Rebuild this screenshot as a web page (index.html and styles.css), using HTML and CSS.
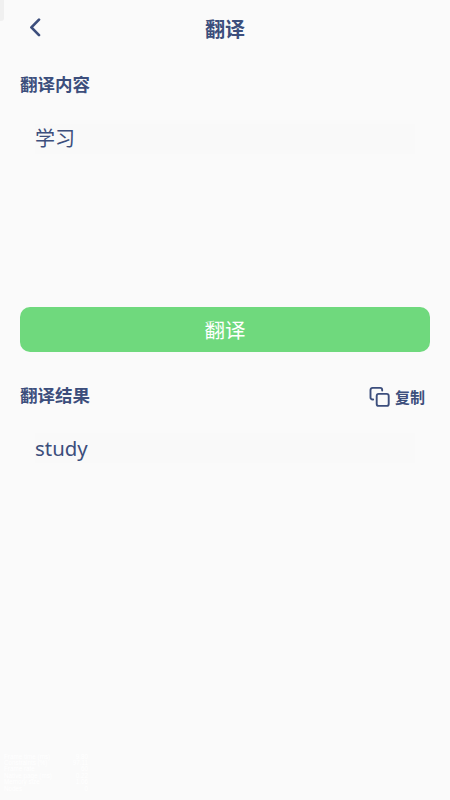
FILE: index.html
```html
<!DOCTYPE html>
<html lang="zh-CN">
<head>
<meta charset="utf-8">
<title>翻译</title>
<link rel="stylesheet" href="styles.css">
</head>
<body>
<header class="navbar">
  <span class="edge-mark"></span>
  <svg class="back" viewBox="0 0 12 20"><path d="M10 2.6 2.4 10.4l7.6 7.7"/></svg>
  <h1>翻译</h1>
</header>
<main>
  <h2>翻译内容</h2>
  <section class="field source"><p>学习</p></section>
  <button class="translate">翻译</button>
  <div class="result-head">
    <h2>翻译结果</h2>
    <div class="copy">
      <svg viewBox="0 0 22 22"><rect x="7.7" y="7.9" width="12" height="12" rx="2"/><path d="M4.2 13.5H3.5a2 2 0 0 1-2-2V3.9a2 2 0 0 1 2-2h7.7a2 2 0 0 1 2 2v.7"/></svg>
      <span>复制</span>
    </div>
  </div>
  <section class="field result"><p>study</p></section>
</main>
<div class="stats">
  <div>Frame time (ms)<br>Constraints (%)<br>Frame rate<br>Native page (ms)<br>Memory size<br>Nodes</div>
  <div class="values">9.80<br>97.11<br>60<br>0.22<br>1.06<br>0</div>
</div>
</body>
</html>
```

FILE: styles.css
```css
* { box-sizing: border-box; margin: 0; padding: 0; }
body {
  height: 800px;
  display: flex;
  flex-direction: column;
  background: #fafafa;
  color: #3c4e7c;
  font-family: "Noto Sans", "Noto Sans CJK SC", sans-serif;
  overflow: hidden;
}
.navbar {
  position: relative;
  display: flex;
  align-items: center;
  justify-content: center;
  height: 60px;
}
.edge-mark {
  position: absolute;
  left: 0;
  top: 0;
  width: 4px;
  height: 21px;
  background: #f0f0f0;
  border-radius: 0 0 3px 0;
}
.back { position: absolute; left: 29px; top: 17px; width: 12px; height: 20px; }
svg { fill: none; stroke: #3c4e7c; stroke-width: 1.9; stroke-linecap: round; stroke-linejoin: round; }
.back { stroke-width: 2.7; }
h1 { font-size: 20px; line-height: 30px; font-weight: 700; }
main { padding: 11px 20px 0; }
h2 { font-size: 17.5px; line-height: 26px; font-weight: 700; }
.field p {
  width: 380px;
  height: 30px;
  margin-left: 15px;
  font-size: 20px;
  line-height: 30px;
  background: #f9f9f9;
}
.source { padding-top: 27px; height: 210px; }
.translate {
  display: block;
  width: 100%;
  height: 45px;
  padding-top: 1px;
  border: 0;
  border-radius: 10px;
  background: #6fd97d;
  color: #fff;
  font: 20.5px/45px "Noto Sans", "Noto Sans CJK SC", sans-serif;
}
.result-head { display: flex; justify-content: space-between; padding: 30px 5px 0 0; }
.copy { display: flex; align-items: center; gap: 4px; height: 29px; font-size: 15px; font-weight: 700; }
.copy svg { width: 22px; height: 22px; }
.result { padding-top: 22px; }
.result p { font-size: 20.4px; }
.stats {
  display: flex;
  justify-content: space-between;
  width: 84px;
  margin: auto 0 8px 4px;
  color: #fff;
  font: 6.3px/6.4px "Liberation Sans", sans-serif;
}
.values { text-align: right; }
```
